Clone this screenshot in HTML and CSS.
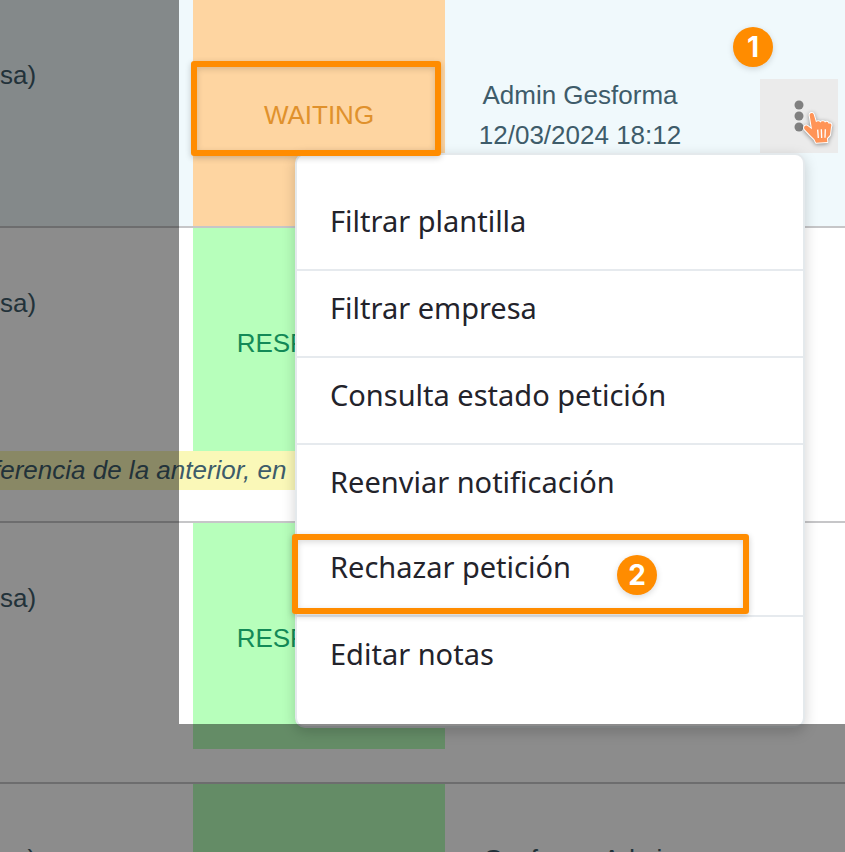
FILE: index.html
```html
<!DOCTYPE html>
<html lang="es">
<head>
    <meta charset="UTF-8">
    <meta name="viewport" content="width=device-width, initial-scale=1.0">
    <title>Peticiones</title>
    <link rel="stylesheet" href="styles.css">
</head>
<body>
    <main class="page">
        <table class="requests">
            <colgroup>
                <col class="col-company">
                <col class="col-status">
                <col class="col-user">
                <col class="col-actions">
            </colgroup>
            <tbody>
                <tr class="request active last">
                    <td class="company">sa)</td>
                    <td class="status waiting">WAITING</td>
                    <td class="user">Admin Gesforma<br>12/03/2024 18:12</td>
                    <td class="actions">
                        <button class="more" type="button" aria-label="Acciones">
                            <svg width="10" height="32" viewBox="0 0 10 32">
                                <circle cx="5" cy="5" r="4.5"/>
                                <circle cx="5" cy="16" r="4.5"/>
                                <circle cx="5" cy="27" r="4.5"/>
                            </svg>
                        </button>
                    </td>
                </tr>

                <tr class="request with-note">
                    <td class="company">sa)</td>
                    <td class="status responded">RESPONDED</td>
                    <td class="user"></td>
                    <td class="actions"></td>
                </tr>
                <tr class="notes last">
                    <td colspan="4"><p class="note">ferencia de la anterior, en</p></td>
                </tr>

                <tr class="request">
                    <td class="company">sa)</td>
                    <td class="status responded">RESPONDED</td>
                    <td class="user"></td>
                    <td class="actions"></td>
                </tr>
                <tr class="notes last">
                    <td colspan="4"></td>
                </tr>

                <tr class="request">
                    <td class="company">sa)</td>
                    <td class="status responded"></td>
                    <td class="user tall">Gesforma Admin</td>
                    <td class="actions"></td>
                </tr>
            </tbody>
        </table>

        <!-- Row actions menu -->
        <ul class="menu">
            <li><button type="button">Filtrar plantilla</button></li>
            <li><button type="button">Filtrar empresa</button></li>
            <li><button type="button">Consulta estado petición</button></li>
            <li class="joined"><button type="button">Reenviar notificación</button></li>
            <li><button type="button">Rechazar petición</button></li>
            <li class="joined"><button type="button">Editar notas</button></li>
        </ul>

        <!-- Guide: dimmed surroundings, frames, steps and pointer -->
        <div class="spotlight"></div>
        <div class="frame frame-status"></div>
        <div class="frame frame-reject"></div>
        <span class="step step-one">1</span>
        <span class="step step-two">2</span>
        <svg class="pointer" width="32" height="34" viewBox="246 274 96 102">
            <path class="hand" d="M269 287 C268 279 278 277 281 284 L288 308 C291 303 299 304 301 309 C304 303 313 304 315 309 C318 304 325 306 326 312 C333 309 336 315 333 322 L330 346 L321 356 L322 367 L288 369 L283 359 L270 346 L253 328 C250 320 257 315 263 319 L276 329 Z"/>
            <path class="knuckles" d="M293 330 L295 355 M304 329 L305 355 M316 329 L315 354"/>
        </svg>
    </main>
</body>
</html>
```

FILE: styles.css
```css
* {
    box-sizing: border-box;
    margin: 0;
    padding: 0;
}

body {
    font-family: "Liberation Sans", Arial, sans-serif;
    font-size: 26px;
    line-height: 40px;
    color: #3e5c6a;
    background-color: #fff;
}

.page {
    position: relative;
    height: 100vh;
    overflow: hidden;
}

/* Requests table */
.requests {
    width: 100%;
    table-layout: fixed;
    border-collapse: separate;
    border-spacing: 0;
}

.col-company {
    width: 193px;
}

.col-status {
    width: 252px;
}

.col-user {
    width: 270px;
}

td {
    vertical-align: top;
}

.request td {
    height: 226px;
}

.request.with-note td {
    height: 223px;
}

.request.active td {
    height: 228px;
    background-color: #f0f9fc;
}

.last td {
    border-bottom: 2px solid #c6c6c8;
}

.company {
    padding-top: 55px;
}

.status {
    padding-top: 95px;
    text-align: center;
}

.request.active .waiting {
    color: #e0912c;
    background-color: #fed5a1;
}

.responded {
    color: #138a57;
    background-color: #b7ffbb;
}

.user {
    padding-top: 75px;
    text-align: center;
}

.user.tall {
    padding-top: 55px;
}

.actions {
    padding-top: 79px;
    padding-right: 7px;
    text-align: right;
}

.more {
    display: inline-flex;
    align-items: center;
    justify-content: center;
    width: 78px;
    height: 74px;
    border: none;
    background-color: #ebebeb;
    fill: #808080;
}

.notes td {
    height: 35px;
}

.note {
    width: fit-content;
    margin-bottom: 31px;
    padding-right: 31px;
    font-style: italic;
    line-height: 39px;
    text-indent: -7px;
    white-space: nowrap;
    background-color: #faf8b8;
}

/* Menu */
.menu {
    position: absolute;
    top: 153px;
    right: 40px;
    width: 510px;
    padding: 29px 0 24px;
    list-style-type: none;
    border: 2px solid #e4e9ec;
    border-radius: 10px;
    background-color: #fff;
    box-shadow: 0 4px 14px rgba(0, 0, 0, 0.18);
}

.menu li {
    border-bottom: 2px solid #e6eaee;
}

.menu li.joined {
    border-bottom: none;
}

.menu button {
    display: block;
    width: 100%;
    padding: 16px 33px 27px;
    font-family: "Noto Sans", sans-serif;
    font-size: 29px;
    line-height: 42px;
    text-align: left;
    color: #23232b;
    border: none;
    background: none;
}

/* Guide */
.spotlight {
    position: absolute;
    top: 0;
    right: 0;
    bottom: 128px;
    left: 179px;
    box-shadow: 0 0 0 2000px rgba(0, 0, 0, 0.45);
}

.frame {
    position: absolute;
    border: 6px solid #ff8c00;
    border-radius: 3px;
    box-shadow: 0 2px 6px rgba(0, 0, 0, 0.2), inset 0 2px 6px rgba(0, 0, 0, 0.15);
}

.frame-status {
    top: 61px;
    left: 191px;
    width: 250px;
    height: 95px;
}

.frame-reject {
    top: 534px;
    left: 292px;
    width: 457px;
    height: 80px;
}

.step {
    position: absolute;
    width: 40px;
    height: 40px;
    font-family: Inter, sans-serif;
    font-size: 28px;
    font-weight: 700;
    text-align: center;
    color: #fff;
    border-radius: 50%;
    background-color: #ff8c00;
    box-shadow: 0 2px 6px rgba(0, 0, 0, 0.15);
}

.step-one {
    top: 27px;
    left: 733px;
}

.step-two {
    top: 555px;
    left: 617px;
}

.pointer {
    position: absolute;
    top: 111px;
    left: 802px;
    overflow: visible;
    filter: drop-shadow(0 1px 2px rgba(0, 0, 0, 0.4));
}

.hand {
    fill: #ff9457;
    stroke: #fff;
    stroke-width: 6;
    stroke-linejoin: round;
    paint-order: stroke;
}

.knuckles {
    fill: none;
    stroke: #fff;
    stroke-width: 4;
}
```
